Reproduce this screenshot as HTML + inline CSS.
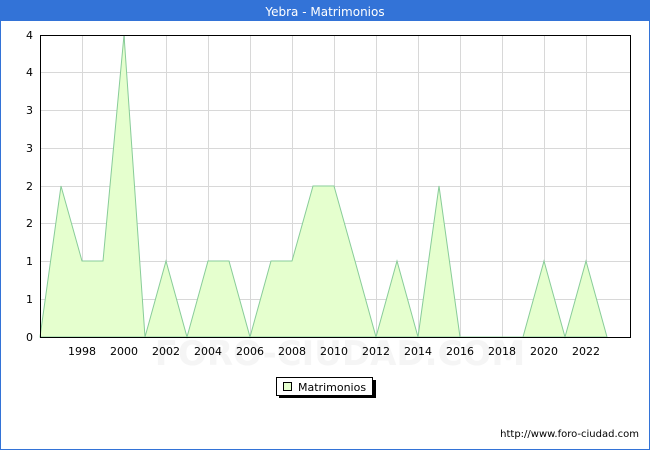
<!DOCTYPE html>
<html><head><meta charset="utf-8"><style>
body{margin:0;width:650px;height:450px;overflow:hidden;background:#fff;font-family:"DejaVu Sans","Liberation Sans",sans-serif}
</style></head><body>
<svg width="650" height="450" xmlns="http://www.w3.org/2000/svg" font-family="DejaVu Sans, Liberation Sans, sans-serif">
<rect x="0.5" y="0.5" width="649" height="449" fill="#fff" stroke="#3373d7"/>
<rect x="0" y="0" width="650" height="21" fill="#3373d7"/>
<text x="325" y="16" text-anchor="middle" fill="#fff" font-size="12">Yebra - Matrimonios</text>
<g stroke="#d8d8d8" stroke-width="1">
<line x1="40" y1="299.5" x2="630" y2="299.5"/><line x1="40" y1="261.5" x2="630" y2="261.5"/>
<line x1="40" y1="223.5" x2="630" y2="223.5"/><line x1="40" y1="186.5" x2="630" y2="186.5"/>
<line x1="40" y1="148.5" x2="630" y2="148.5"/><line x1="40" y1="110.5" x2="630" y2="110.5"/>
<line x1="40" y1="72.5" x2="630" y2="72.5"/>
<line x1="82.5" y1="35" x2="82.5" y2="337"/><line x1="124.5" y1="35" x2="124.5" y2="337"/>
<line x1="166.5" y1="35" x2="166.5" y2="337"/><line x1="208.5" y1="35" x2="208.5" y2="337"/>
<line x1="250.5" y1="35" x2="250.5" y2="337"/><line x1="292.5" y1="35" x2="292.5" y2="337"/>
<line x1="334.5" y1="35" x2="334.5" y2="337"/><line x1="376.5" y1="35" x2="376.5" y2="337"/>
<line x1="418.5" y1="35" x2="418.5" y2="337"/><line x1="460.5" y1="35" x2="460.5" y2="337"/>
<line x1="502.5" y1="35" x2="502.5" y2="337"/><line x1="544.5" y1="35" x2="544.5" y2="337"/>
<line x1="586.5" y1="35" x2="586.5" y2="337"/>
</g>
<text x="340" y="365" text-anchor="middle" font-size="34" fill="#f5f5f5" font-weight="bold">FORO-CIUDAD.COM</text>
<polygon fill="#e5ffce" stroke="#88cc99" stroke-width="1" points="40,337 61,186 82,261 103,261 124,35 145,337 166,261 187,337 208,261 229,261 250,337 271,261 292,261 313,186 334,186 355,261 376,337 397,261 418,337 439,186 460,337 523,337 544,261 565,337 586,261 607,337"/>
<rect x="40.5" y="35.5" width="590" height="302" fill="none" stroke="#000"/>
<g font-size="11" fill="#000" text-anchor="end">
<text x="33" y="341">0</text><text x="33" y="303">1</text><text x="33" y="265">1</text>
<text x="33" y="227">2</text><text x="33" y="190">2</text><text x="33" y="152">3</text>
<text x="33" y="114">3</text><text x="33" y="76">4</text><text x="33" y="39">4</text>
</g>
<g font-size="11" fill="#000" text-anchor="middle">
<text x="82" y="355">1998</text><text x="124" y="355">2000</text><text x="166" y="355">2002</text>
<text x="208" y="355">2004</text><text x="250" y="355">2006</text><text x="292" y="355">2008</text>
<text x="334" y="355">2010</text><text x="376" y="355">2012</text><text x="418" y="355">2014</text>
<text x="460" y="355">2016</text><text x="502" y="355">2018</text><text x="544" y="355">2020</text>
<text x="586" y="355">2022</text>
</g>
<rect x="279" y="380" width="97" height="18" fill="#000"/>
<rect x="276.5" y="377.5" width="96" height="18" fill="#fff" stroke="#000"/>
<rect x="283.5" y="382.5" width="8" height="8" fill="#e5ffce" stroke="#000"/>
<text x="298" y="391" font-size="11">Matrimonios</text>
<text x="639" y="437" text-anchor="end" font-size="10">http://www.foro-ciudad.com</text>
</svg>
</body></html>
